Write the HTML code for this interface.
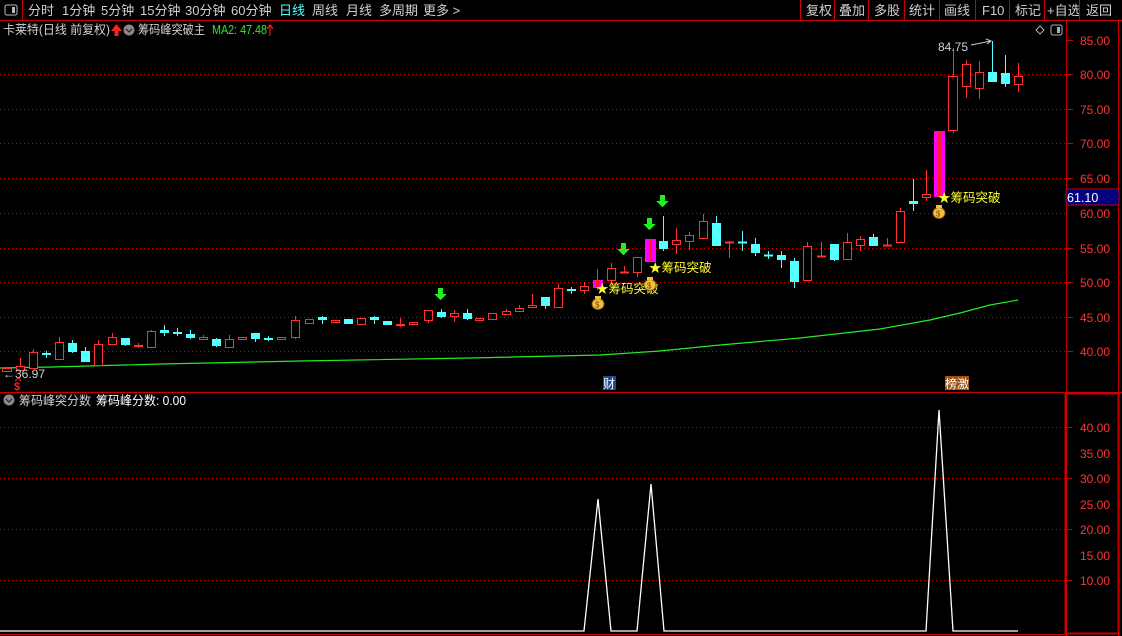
<!DOCTYPE html>
<html><head><meta charset="utf-8"><style>
html,body{margin:0;padding:0;background:#000;width:1122px;height:636px;overflow:hidden;font-family:"Liberation Sans","Noto Sans CJK SC",sans-serif}
svg{position:absolute;left:0;top:0}
.r{fill:#000;stroke:#ff3333;stroke-width:1}
.c{fill:#55ffff;stroke:#55ffff;stroke-width:1}
.wr{stroke:#ff3333;stroke-width:1}
.wc{stroke:#55ffff;stroke-width:1}
.g{stroke:#c00;stroke-width:1;stroke-dasharray:1 3}
text{font-family:"Liberation Sans","Noto Sans CJK SC",sans-serif}
</style></head><body>
<svg width="1122" height="636" viewBox="0 0 1122 636" shape-rendering="crispEdges">
<rect x="0" y="0" width="1122" height="20" fill="#000"/>
<line x1="0" y1="20.5" x2="1122" y2="20.5" stroke="#c00"/>
<rect x="5" y="5" width="12" height="10" fill="none" stroke="#bbb" rx="2"/><rect x="12" y="7" width="3" height="6" fill="#bbb"/>
<line x1="22.5" y1="0" x2="22.5" y2="20" stroke="#c00"/>
<g font-size="13" fill="#d0d0d0">
<text x="28" y="15">分时</text><text x="62" y="15">1分钟</text><text x="101" y="15">5分钟</text><text x="140" y="15">15分钟</text><text x="185" y="15">30分钟</text><text x="231" y="15">60分钟</text>
<text x="279" y="15" fill="#55ffff">日线</text><text x="312" y="15">周线</text><text x="346" y="15">月线</text><text x="379" y="15">多周期</text><text x="423" y="15">更多 &gt;</text>
<text x="806" y="15">复权</text><text x="839" y="15">叠加</text><text x="874" y="15">多股</text><text x="909" y="15">统计</text><text x="944" y="15">画线</text><text x="982" y="15">F10</text><text x="1015" y="15">标记</text><text x="1047" y="15">+自选</text><text x="1086" y="15">返回</text>
</g>
<g stroke="#c00"><line x1="800.5" y1="0" x2="800.5" y2="20"/><line x1="834.5" y1="0" x2="834.5" y2="20"/><line x1="868.5" y1="0" x2="868.5" y2="20"/><line x1="904.5" y1="0" x2="904.5" y2="20"/><line x1="939.5" y1="0" x2="939.5" y2="20"/><line x1="975.5" y1="0" x2="975.5" y2="20"/><line x1="1009.5" y1="0" x2="1009.5" y2="20"/><line x1="1044.5" y1="0" x2="1044.5" y2="20"/><line x1="1079.5" y1="0" x2="1079.5" y2="20"/></g>
<g font-size="12.5">
<text x="3" y="34" fill="#d0d0d0" textLength="107" lengthAdjust="spacingAndGlyphs">卡莱特(日线 前复权)</text>
<path d="M111 31h3.5v5h4v-5h3.5l-5.5-7z" fill="#ff2020"/>
<circle cx="129" cy="30" r="5.5" fill="#888"/><path d="M126 29l3 3 3-3" stroke="#222" stroke-width="1.3" fill="none"/>
<text x="138" y="34" fill="#d0d0d0" textLength="67" lengthAdjust="spacingAndGlyphs">筹码峰突破主</text>
<text x="212" y="34" fill="#22ee22" textLength="55" lengthAdjust="spacingAndGlyphs">MA2: 47.48</text>
<path d="M270 36v-10M267 29l3-4 3 4" stroke="#ff2020" stroke-width="1.2" fill="none"/>
</g>
<path d="M1040 26l4 4-4 4-4-4z" fill="none" stroke="#aaa"/>
<rect x="1051" y="25" width="11" height="10" rx="2" fill="none" stroke="#aaa"/><rect x="1057" y="27" width="3" height="6" fill="#aaa"/>
<line x1="1066.5" y1="21" x2="1066.5" y2="636" stroke="#c00"/>
<line x1="1118.5" y1="21" x2="1118.5" y2="636" stroke="#c00"/>
<line x1="0" y1="392.5" x2="1122" y2="392.5" stroke="#c00"/>
<rect x="1065.5" y="393.5" width="53" height="240" fill="none" stroke="#c00" stroke-width="2"/>
<line x1="0" y1="634.5" x2="1066" y2="634.5" stroke="#c00"/>
<g class="g"><line x1="0" y1="74.5" x2="1066" y2="74.5"/><line x1="0" y1="109.5" x2="1066" y2="109.5"/><line x1="0" y1="143.5" x2="1066" y2="143.5"/><line x1="0" y1="178.5" x2="1066" y2="178.5"/><line x1="0" y1="213.5" x2="1066" y2="213.5"/><line x1="0" y1="248.5" x2="1066" y2="248.5"/><line x1="0" y1="282.5" x2="1066" y2="282.5"/><line x1="0" y1="317.5" x2="1066" y2="317.5"/><line x1="0" y1="351.5" x2="1066" y2="351.5"/>
<line x1="0" y1="427.5" x2="1066" y2="427.5"/><line x1="0" y1="478.5" x2="1066" y2="478.5"/><line x1="0" y1="529.5" x2="1066" y2="529.5"/><line x1="0" y1="580.5" x2="1066" y2="580.5"/></g>
<g stroke="#c00"><line x1="1066" y1="40.5" x2="1073" y2="40.5"/><line x1="1066" y1="74.5" x2="1073" y2="74.5"/><line x1="1066" y1="109.5" x2="1073" y2="109.5"/><line x1="1066" y1="143.5" x2="1073" y2="143.5"/><line x1="1066" y1="178.5" x2="1073" y2="178.5"/><line x1="1066" y1="248.5" x2="1073" y2="248.5"/><line x1="1066" y1="282.5" x2="1073" y2="282.5"/><line x1="1066" y1="317.5" x2="1073" y2="317.5"/><line x1="1066" y1="351.5" x2="1073" y2="351.5"/>
<line x1="1066" y1="427.5" x2="1072" y2="427.5"/><line x1="1066" y1="478.5" x2="1072" y2="478.5"/><line x1="1066" y1="529.5" x2="1072" y2="529.5"/><line x1="1066" y1="580.5" x2="1072" y2="580.5"/></g>
<g font-size="12" fill="#ff3333">
<text x="1080" y="45">85.00</text><text x="1080" y="79">80.00</text><text x="1080" y="114">75.00</text><text x="1080" y="148">70.00</text><text x="1080" y="183">65.00</text><text x="1080" y="218">60.00</text><text x="1080" y="253">55.00</text><text x="1080" y="287">50.00</text><text x="1080" y="322">45.00</text><text x="1080" y="356">40.00</text>
<text x="1080" y="432">40.00</text><text x="1080" y="458">35.00</text><text x="1080" y="483">30.00</text><text x="1080" y="509">25.00</text><text x="1080" y="534">20.00</text><text x="1080" y="560">15.00</text><text x="1080" y="585">10.00</text>
</g>
<rect x="1066" y="189" width="53" height="16" fill="#000080" stroke="#c00"/>
<text x="1067" y="202" font-size="12.5" fill="#fff">61.10</text>
<polyline fill="none" stroke="#22ee22" stroke-width="1.2" shape-rendering="auto" points="0,368 52,367 160,364 300,361 470,358 600,355 660,351 720,345 800,338 880,329 930,320 960,313 990,305 1018,300"/>
<g>
<line class="wr" x1="20.5" y1="358" x2="20.5" y2="370"/><rect class="r" x="2.5" y="368.5" width="9" height="3"/><rect class="r" x="16.5" y="366.5" width="8" height="4"/>
<line class="wr" x1="33.5" y1="349" x2="33.5" y2="368"/><rect class="r" x="29.5" y="352.5" width="8" height="16"/>
<line class="wc" x1="46.5" y1="351" x2="46.5" y2="358"/><rect class="c" x="42.5" y="353.5" width="8" height="1"/>
<line class="wr" x1="59.5" y1="337" x2="59.5" y2="360"/><rect class="r" x="55.5" y="342.5" width="8" height="17"/>
<line class="wc" x1="72.5" y1="340" x2="72.5" y2="353"/><rect class="c" x="68.5" y="343.5" width="8" height="8"/>
<line class="wc" x1="85.5" y1="347" x2="85.5" y2="362"/><rect class="c" x="81.5" y="351.5" width="8" height="10"/>
<line class="wr" x1="98.5" y1="340" x2="98.5" y2="365"/><rect class="r" x="94.5" y="344.5" width="8" height="21"/>
<line class="wr" x1="112.5" y1="333" x2="112.5" y2="344"/><rect class="r" x="108.5" y="337.5" width="8" height="7"/>
<line class="wc" x1="125.5" y1="338" x2="125.5" y2="346"/><rect class="c" x="121.5" y="338.5" width="8" height="6"/>
<line class="wr" x1="138.5" y1="343" x2="138.5" y2="348"/><rect class="r" x="134.5" y="345.5" width="8" height="1"/>
<line class="wr" x1="151.5" y1="330" x2="151.5" y2="347"/><rect class="r" x="147.5" y="331.5" width="8" height="16"/>
<line class="wc" x1="164.5" y1="325" x2="164.5" y2="336"/><rect class="c" x="160.5" y="330.5" width="8" height="2"/>
<line class="wc" x1="177.5" y1="328" x2="177.5" y2="336"/><rect class="c" x="173.5" y="332.5" width="8" height="1"/>
<line class="wc" x1="190.5" y1="330" x2="190.5" y2="339"/><rect class="c" x="186.5" y="334.5" width="8" height="3"/>
<line class="wr" x1="203.5" y1="335" x2="203.5" y2="340"/><rect class="r" x="199.5" y="337.5" width="8" height="2"/>
<line class="wc" x1="216.5" y1="338" x2="216.5" y2="347"/><rect class="c" x="212.5" y="339.5" width="8" height="6"/>
<line class="wr" x1="229.5" y1="335" x2="229.5" y2="347"/><rect class="r" x="225.5" y="339.5" width="8" height="8"/>
<rect class="r" x="238.5" y="337.5" width="8" height="2"/>
<line class="wc" x1="255.5" y1="333" x2="255.5" y2="342"/><rect class="c" x="251.5" y="333.5" width="8" height="5"/>
<line class="wc" x1="268.5" y1="336" x2="268.5" y2="341"/><rect class="c" x="264.5" y="338.5" width="8" height="1"/>
<rect class="r" x="277.5" y="337.5" width="8" height="2"/>
<line class="wr" x1="295.5" y1="316" x2="295.5" y2="339"/><rect class="r" x="291.5" y="320.5" width="8" height="17"/>
<rect class="r" x="305.5" y="319.5" width="8" height="4"/>
<line class="wc" x1="322.5" y1="316" x2="322.5" y2="324"/><rect class="c" x="318.5" y="317.5" width="8" height="2"/>
<rect class="r" x="331.5" y="320.5" width="8" height="2"/>
<rect class="c" x="344.5" y="319.5" width="8" height="4"/>
<rect class="r" x="357.5" y="318.5" width="8" height="6"/>
<line class="wc" x1="374.5" y1="316" x2="374.5" y2="324"/><rect class="c" x="370.5" y="317.5" width="8" height="2"/>
<rect class="c" x="383.5" y="321.5" width="8" height="3"/>
<line class="wr" x1="400.5" y1="318" x2="400.5" y2="327"/><rect class="r" x="396.5" y="324.5" width="8" height="1"/>
<rect class="r" x="409.5" y="322.5" width="8" height="2"/>
<line class="wr" x1="428.5" y1="310" x2="428.5" y2="323"/><rect class="r" x="424.5" y="310.5" width="8" height="10"/>
<line class="wc" x1="441.5" y1="309" x2="441.5" y2="318"/><rect class="c" x="437.5" y="312.5" width="8" height="4"/>
<line class="wr" x1="454.5" y1="310" x2="454.5" y2="322"/><rect class="r" x="450.5" y="313.5" width="8" height="3"/>
<line class="wc" x1="467.5" y1="309" x2="467.5" y2="320"/><rect class="c" x="463.5" y="313.5" width="8" height="5"/>
<rect class="r" x="475.5" y="318.5" width="8" height="2"/>
<rect class="r" x="488.5" y="313.5" width="8" height="6"/>
<line class="wr" x1="506.5" y1="309" x2="506.5" y2="314"/><rect class="r" x="502.5" y="311.5" width="8" height="3"/>
<line class="wr" x1="519.5" y1="305" x2="519.5" y2="311"/><rect class="r" x="515.5" y="308.5" width="8" height="3"/>
<line class="wr" x1="532.5" y1="294" x2="532.5" y2="307"/><rect class="r" x="528.5" y="305.5" width="8" height="2"/>
<line class="wc" x1="545.5" y1="297" x2="545.5" y2="309"/><rect class="c" x="541.5" y="297.5" width="8" height="8"/>
<line class="wr" x1="558.5" y1="284" x2="558.5" y2="307"/><rect class="r" x="554.5" y="288.5" width="8" height="19"/>
<line class="wc" x1="571.5" y1="287" x2="571.5" y2="294"/><rect class="c" x="567.5" y="289.5" width="8" height="1"/>
<line class="wr" x1="584.5" y1="282" x2="584.5" y2="294"/><rect class="r" x="580.5" y="286.5" width="8" height="4"/>
<line class="wr" x1="597.5" y1="269" x2="597.5" y2="290"/><rect x="593" y="280" width="10" height="8" fill="#ff00ff"/><rect x="596" y="280" width="3" height="8" fill="#ff2020"/>
<line class="wr" x1="611.5" y1="263" x2="611.5" y2="283"/><rect class="r" x="607.5" y="268.5" width="8" height="12"/>
<line class="wr" x1="624.5" y1="266" x2="624.5" y2="272"/><rect class="r" x="620.5" y="272" width="8" height="1"/>
<line class="wr" x1="637.5" y1="257" x2="637.5" y2="277"/><rect class="r" x="633.5" y="257.5" width="8" height="15"/>
<rect x="645" y="239" width="11" height="23" fill="#ff00ff"/><rect x="649" y="239" width="3" height="23" fill="#ff2020"/>
<line class="wc" x1="663.5" y1="216" x2="663.5" y2="251"/><rect class="c" x="659.5" y="241.5" width="8" height="7"/>
<line class="wr" x1="676.5" y1="228" x2="676.5" y2="254"/><rect class="r" x="672.5" y="240.5" width="8" height="4"/>
<line class="wr" x1="689.5" y1="232" x2="689.5" y2="250"/><rect class="r" x="685.5" y="235.5" width="8" height="6"/>
<line class="wr" x1="703.5" y1="214" x2="703.5" y2="238"/><rect class="r" x="699.5" y="221.5" width="8" height="17"/>
<line class="wc" x1="716.5" y1="216" x2="716.5" y2="246"/><rect class="c" x="712.5" y="223.5" width="8" height="22"/>
<line class="wr" x1="729.5" y1="241" x2="729.5" y2="258"/><rect class="r" x="725.5" y="242" width="8" height="1"/>
<line class="wc" x1="742.5" y1="231" x2="742.5" y2="251"/><rect class="c" x="738.5" y="242" width="8" height="1"/>
<line class="wc" x1="755.5" y1="238" x2="755.5" y2="256"/><rect class="c" x="751.5" y="244.5" width="8" height="8"/>
<line class="wc" x1="768.5" y1="251" x2="768.5" y2="259"/><rect class="c" x="764.5" y="255" width="8" height="1"/>
<line class="wc" x1="781.5" y1="251" x2="781.5" y2="268"/><rect class="c" x="777.5" y="255.5" width="8" height="4"/>
<line class="wc" x1="794.5" y1="258" x2="794.5" y2="288"/><rect class="c" x="790.5" y="261.5" width="8" height="20"/>
<line class="wr" x1="807.5" y1="242" x2="807.5" y2="280"/><rect class="r" x="803.5" y="246.5" width="8" height="34"/>
<line class="wr" x1="821.5" y1="242" x2="821.5" y2="256"/><rect class="r" x="817.5" y="256" width="8" height="1"/>
<line class="wc" x1="834.5" y1="244" x2="834.5" y2="261"/><rect class="c" x="830.5" y="244.5" width="8" height="15"/>
<line class="wr" x1="847.5" y1="233" x2="847.5" y2="259"/><rect class="r" x="843.5" y="242.5" width="8" height="17"/>
<line class="wr" x1="860.5" y1="236" x2="860.5" y2="251"/><rect class="r" x="856.5" y="239.5" width="8" height="6"/>
<line class="wc" x1="873.5" y1="234" x2="873.5" y2="246"/><rect class="c" x="869.5" y="237.5" width="8" height="8"/>
<line class="wr" x1="887.5" y1="238" x2="887.5" y2="246"/><rect class="r" x="883.5" y="245" width="8" height="1"/>
<line class="wr" x1="900.5" y1="208" x2="900.5" y2="242"/><rect class="r" x="896.5" y="211.5" width="8" height="31"/>
<line class="wc" x1="913.5" y1="179" x2="913.5" y2="211"/><rect class="c" x="909.5" y="201.5" width="8" height="2"/>
<line class="wr" x1="926.5" y1="170" x2="926.5" y2="201"/><rect class="r" x="922.5" y="194.5" width="8" height="3"/>
<rect x="934" y="131" width="11" height="66" fill="#ff00ff"/><rect x="938" y="131" width="3" height="66" fill="#ff2020"/>
<line class="wr" x1="953.5" y1="48" x2="953.5" y2="133"/><rect class="r" x="948.5" y="76.5" width="9" height="54"/>
<line class="wr" x1="966.5" y1="60" x2="966.5" y2="98"/><rect class="r" x="962.5" y="64.5" width="8" height="22"/>
<line class="wr" x1="979.5" y1="61" x2="979.5" y2="99"/><rect class="r" x="975.5" y="72.5" width="8" height="16"/>
<line class="wc" x1="992.5" y1="41" x2="992.5" y2="82"/><rect class="c" x="988.5" y="72.5" width="8" height="9"/>
<line class="wc" x1="1005.5" y1="55" x2="1005.5" y2="87"/><rect class="c" x="1001.5" y="73.5" width="8" height="10"/>
<line class="wr" x1="1018.5" y1="63" x2="1018.5" y2="92"/><rect class="r" x="1014.5" y="76.5" width="8" height="8"/>
</g>
<g fill="#22ee22">
<path d="M438 288h5v6h4l-6.5 6-6.5-6h4z"/>
<path d="M621 243h5v6h4l-6.5 6-6.5-6h4z"/>
<path d="M647 218h5v6h4l-6.5 6-6.5-6h4z"/>
<path d="M660 195h5v6h4l-6.5 6-6.5-6h4z"/>
</g>
<g font-size="12.5" fill="#ffff33">
<text x="596" y="293">★筹码突破</text>
<text x="649" y="272">★筹码突破</text>
<text x="938" y="202">★筹码突破</text>
</g>
<g shape-rendering="auto">
<g transform="translate(598,303)"><ellipse cx="0" cy="1" rx="6" ry="5.5" fill="#f0c040" stroke="#8a5a10"/><rect x="-3" y="-7" width="6" height="3" fill="#f0c040"/><text x="-3" y="4.5" font-size="8" fill="#8a3a00">$</text></g>
<g transform="translate(650,284)"><ellipse cx="0" cy="1" rx="6" ry="5.5" fill="#f0c040" stroke="#8a5a10"/><rect x="-3" y="-7" width="6" height="3" fill="#f0c040"/><text x="-3" y="4.5" font-size="8" fill="#8a3a00">$</text></g>
<g transform="translate(939,212)"><ellipse cx="0" cy="1" rx="6" ry="5.5" fill="#f0c040" stroke="#8a5a10"/><rect x="-3" y="-7" width="6" height="3" fill="#f0c040"/><text x="-3" y="4.5" font-size="8" fill="#8a3a00">$</text></g>
</g>
<text x="938" y="51" font-size="12" fill="#d0d0d0">84.75</text>
<path d="M971 45l20-4M986 39l5 2-4 3" stroke="#ccc" fill="none" shape-rendering="auto"/>
<text x="3" y="378" font-size="12" fill="#d0d0d0">←36.97</text>
<text x="14" y="390" font-size="11" font-weight="bold" fill="#ff2020">$</text>
<path d="M15 381l3-3 3 3" stroke="#ff2020" fill="none"/>
<rect x="603" y="376" width="13" height="14" fill="#1a4a90"/><text x="603" y="388" font-size="12" fill="#fff">财</text>
<rect x="945" y="376" width="24" height="14" fill="#a05010"/><text x="945" y="388" font-size="12" fill="#fff">榜激</text>
<circle cx="9" cy="400" r="5.5" fill="#888"/><path d="M6 399l3 3 3-3" stroke="#222" stroke-width="1.3" fill="none"/>
<text x="19" y="405" font-size="12.5" fill="#d0d0d0" textLength="72" lengthAdjust="spacingAndGlyphs">筹码峰突分数</text>
<text x="96" y="405" font-size="12.5" fill="#fff" textLength="90" lengthAdjust="spacingAndGlyphs">筹码峰分数: 0.00</text>
<polyline fill="none" stroke="#fff" stroke-width="1.3" shape-rendering="auto" points="0,631 584,631 598,499 611,631 637,631 651,484 664,631 926,631 939,410 953,631 1018,631"/>
</svg>
</body></html>
